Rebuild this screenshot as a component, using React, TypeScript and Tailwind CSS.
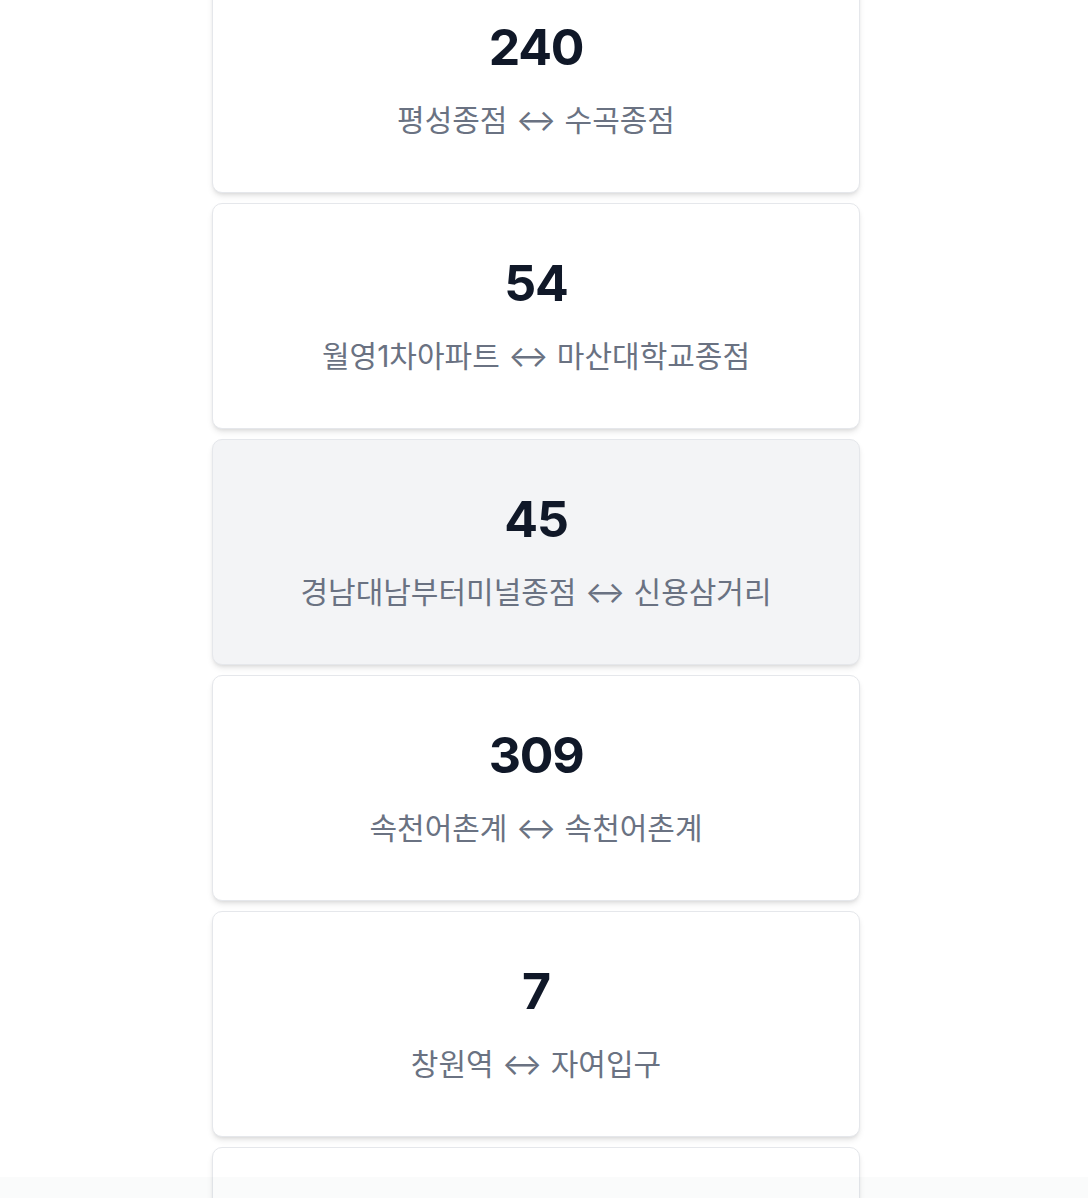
const routes = [
  { no: '240', from: '평성종점', to: '수곡종점' },
  { no: '54', from: '월영1차아파트', to: '마산대학교종점' },
  { no: '45', from: '경남대남부터미널종점', to: '신용삼거리', active: true },
  { no: '309', from: '속천어촌계', to: '속천어촌계' },
  { no: '7', from: '창원역', to: '자여입구' },
  { no: '100', from: '창원역', to: '마산역' },
];

const RouteCard = ({ no, from, to, active }: { no: string; from: string; to: string; active?: boolean }) => (
  <div
    className={`h-[226px] rounded-[10px] border border-gray-200 shadow-md flex flex-col items-center pt-[54px] overflow-hidden ${
      active ? 'bg-gray-100' : 'bg-white'
    }`}
  >
    <div className="text-[50px] leading-none font-bold text-gray-900 tracking-[-0.025em]">{no}</div>
    <div className="mt-[28px] text-[30px] leading-[40px] text-gray-500 whitespace-nowrap">
      {from} ↔ {to}
    </div>
  </div>
);

export default function App() {
  return (
    <div
      className="min-h-screen bg-white"
      style={{ fontFamily: 'Inter, "Noto Sans CJK KR", sans-serif' }}
    >
      <div className="w-[1072px]">
        <div className="w-[648px] mx-auto -mt-[33px] flex flex-col gap-[10px] pb-10">
          {routes.map((r) => (
            <RouteCard key={r.no} {...r} />
          ))}
        </div>
      </div>
      <div className="fixed bottom-0 left-0 right-0 h-[21px] bg-gray-500/[0.03]" />
    </div>
  );
}
